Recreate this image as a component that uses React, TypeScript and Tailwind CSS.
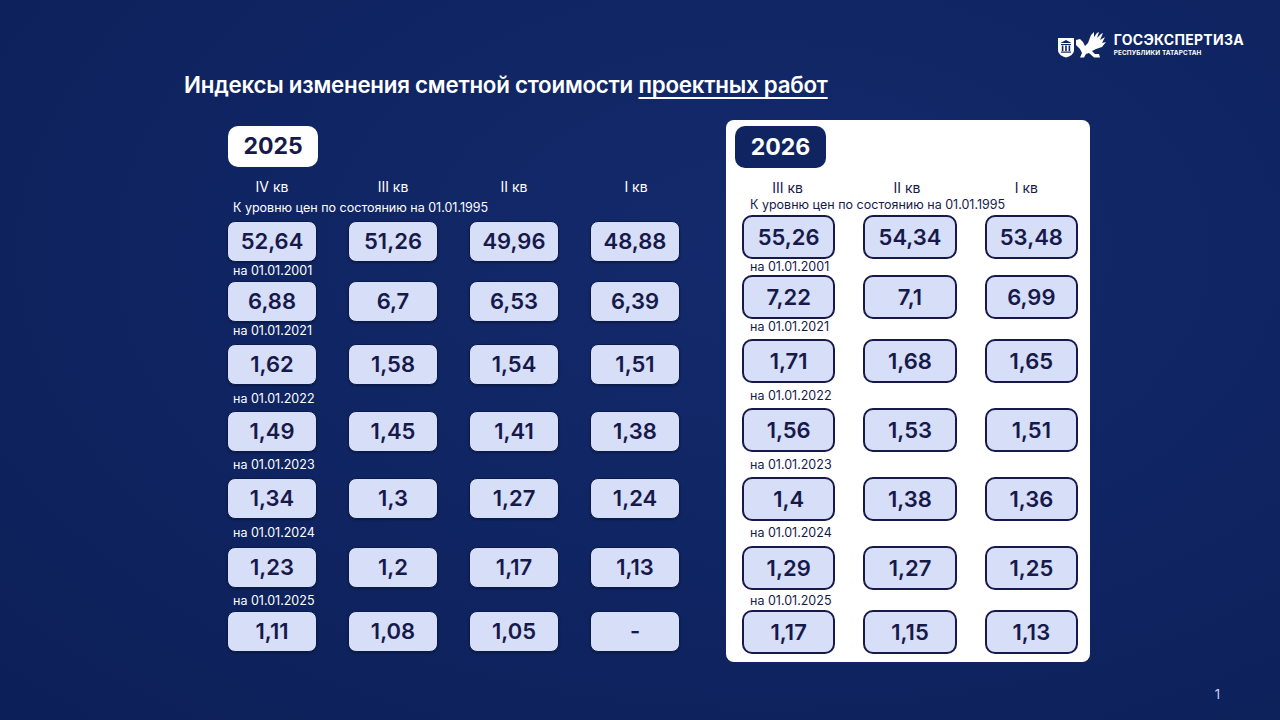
const FONT = { fontFamily: "Inter, 'Noto Sans', sans-serif" };

type Row = { label: string; values: string[]; labelTop: string; boxTop: string };

const rows2025: Row[] = [
  { label: "К уровню цен по состоянию на 01.01.1995", values: ["52,64", "51,26", "49,96", "48,88"], labelTop: "mt-[5px]", boxTop: "mt-[6px]" },
  { label: "на 01.01.2001", values: ["6,88", "6,7", "6,53", "6,39"], labelTop: "mt-[2px]", boxTop: "mt-[3px]" },
  { label: "на 01.01.2021", values: ["1,62", "1,58", "1,54", "1,51"], labelTop: "mt-[2px]", boxTop: "mt-[6px]" },
  { label: "на 01.01.2022", values: ["1,49", "1,45", "1,41", "1,38"], labelTop: "mt-[7px]", boxTop: "mt-[5px]" },
  { label: "на 01.01.2023", values: ["1,34", "1,3", "1,27", "1,24"], labelTop: "mt-[6px]", boxTop: "mt-[6px]" },
  { label: "на 01.01.2024", values: ["1,23", "1,2", "1,17", "1,13"], labelTop: "mt-[7px]", boxTop: "mt-[7px]" },
  { label: "на 01.01.2025", values: ["1,11", "1,08", "1,05", "-"], labelTop: "mt-[6px]", boxTop: "mt-[3px]" },
];

const rows2026: Row[] = [
  { label: "К уровню цен по состоянию на 01.01.1995", values: ["55,26", "54,34", "53,48"], labelTop: "mt-[1px]", boxTop: "mt-[3px]" },
  { label: "на 01.01.2001", values: ["7,22", "7,1", "6,99"], labelTop: "mt-[1px]", boxTop: "mt-[1px]" },
  { label: "на 01.01.2021", values: ["1,71", "1,68", "1,65"], labelTop: "mt-[1px]", boxTop: "mt-[5px]" },
  { label: "на 01.01.2022", values: ["1,56", "1,53", "1,51"], labelTop: "mt-[6px]", boxTop: "mt-[5px]" },
  { label: "на 01.01.2023", values: ["1,4", "1,38", "1,36"], labelTop: "mt-[6px]", boxTop: "mt-[5px]" },
  { label: "на 01.01.2024", values: ["1,29", "1,27", "1,25"], labelTop: "mt-[5px]", boxTop: "mt-[6px]" },
  { label: "на 01.01.2025", values: ["1,17", "1,15", "1,13"], labelTop: "mt-[4px]", boxTop: "mt-[2px]" },
];

const Logo = () => (
  <div className="flex items-center gap-[7px]">
    <svg width="50" height="26" viewBox="0 0 50 26" fill="white">
      {/* shield with building */}
      <path d="M1 6 H17 V18 C17 22 13 24.5 9 25.5 C5 24.5 1 22 1 18 Z" />
      <path d="M3.5 11 L9 8 L14.5 11 Z" fill="#0f2461" />
      <rect x="4" y="12" width="10" height="1" fill="#0f2461" />
      <rect x="4.8" y="13.5" width="1.6" height="5.5" fill="#0f2461" />
      <rect x="8.2" y="13.5" width="1.6" height="5.5" fill="#0f2461" />
      <rect x="11.6" y="13.5" width="1.6" height="5.5" fill="#0f2461" />
      <rect x="4" y="19.5" width="10" height="1.2" fill="#0f2461" />
      {/* winged griffin */}
      <path d="M19 8 L23 7 L26 10 L28 14 L31 11 L34 3 L37 0 L37 5 L40 1 L42 0 L40 6 L44 2 L46 1 L43 8 L48 5 L45 11 L49 10 L45 15 L39 17 L35 19 L38 22 L42 22 L43 25.5 L37 25.5 L32 21 L29 22 L27 25.5 L23 25.5 L25 21 L23 17 L19 13 Z" />
    </svg>
    <div className="flex flex-col leading-none text-white">
      <span className="text-[14px] font-bold tracking-[0.02em]">ГОСЭКСПЕРТИЗА</span>
      <span className="mt-[3px] text-[6.4px] font-bold tracking-[0.02em]">РЕСПУБЛИКИ ТАТАРСТАН</span>
    </div>
  </div>
);

const App = () => {
  return (
    <div
      className="relative h-[720px] w-[1280px] overflow-hidden bg-[radial-gradient(ellipse_at_60%_35%,#142a6c_0%,#0f2461_55%,#0c1f58_100%)] text-white"
      style={FONT}
    >
      {/* Header */}
      <div className="flex justify-end pr-[36px] pt-[32px]">
        <Logo />
      </div>

      <h1 className="ml-[184px] mt-[13px] text-[22.3px] font-semibold leading-[28px] tracking-[-0.01em]">
        Индексы изменения сметной стоимости{" "}
        <span className="underline decoration-[1.5px] underline-offset-[4px] [text-decoration-skip-ink:none]">
          проектных работ
        </span>
      </h1>

      <div className="mt-[21px] flex">
        {/* 2025 */}
        <div className="ml-[227px] mt-[6px] w-[453px]">
          <div className="ml-[1px] flex h-[41px] w-[90px] items-center justify-center rounded-[10px] bg-white text-[23px] font-bold text-[#16194a]">
            2025
          </div>
          <div className="mt-[11px] grid grid-cols-4 gap-x-[31px] text-center text-[14px] leading-[18px]">
            <span>IV кв</span>
            <span>III кв</span>
            <span>II кв</span>
            <span className="pl-[2px]">I кв</span>
          </div>
          {rows2025.map((r) => (
            <div key={r.label}>
              <div className={`${r.labelTop} pl-[6px] text-[12.5px] leading-[14px]`}>{r.label}</div>
              <div className={`${r.boxTop} grid grid-cols-4 gap-x-[31px]`}>
                {r.values.map((v, i) => (
                  <div
                    key={i}
                    className="flex h-[41px] items-center justify-center rounded-[8px] border border-[#0a1a4c] bg-[#d6def8] text-[22px] font-semibold text-[#16194a] shadow-[0_1px_2px_rgba(0,0,0,0.35)]"
                  >
                    {v}
                  </div>
                ))}
              </div>
            </div>
          ))}
        </div>

        {/* 2026 */}
        <div className="ml-[46px] flex h-[542px] w-[364px] flex-col rounded-[8px] bg-white pl-[16px] pr-[12px] text-[#16194a]">
          <div className="-ml-[7px] mt-[6px] flex h-[42px] w-[91px] items-center justify-center rounded-[10px] bg-[#0f2461] text-[23px] font-bold text-white">
            2026
          </div>
          <div className="mt-[11px] grid grid-cols-3 gap-x-[28px] pr-[6px] text-center text-[14px] leading-[18px]">
            <span>III кв</span>
            <span>II кв</span>
            <span>I кв</span>
          </div>
          {rows2026.map((r) => (
            <div key={r.label}>
              <div className={`${r.labelTop} pl-[8px] text-[12.5px] leading-[14px]`}>{r.label}</div>
              <div className={`${r.boxTop} grid grid-cols-3 gap-x-[28px]`}>
                {r.values.map((v, i) => (
                  <div
                    key={i}
                    className="flex h-[44px] items-center justify-center rounded-[10px] border-2 border-[#16194a] bg-[#d6def8] text-[22px] font-semibold text-[#16194a]"
                  >
                    {v}
                  </div>
                ))}
              </div>
            </div>
          ))}
        </div>
      </div>

      <div className="absolute bottom-[16px] right-[60px] text-[13px] text-[#c9d2f0]">1</div>
    </div>
  );
};

export default App;
